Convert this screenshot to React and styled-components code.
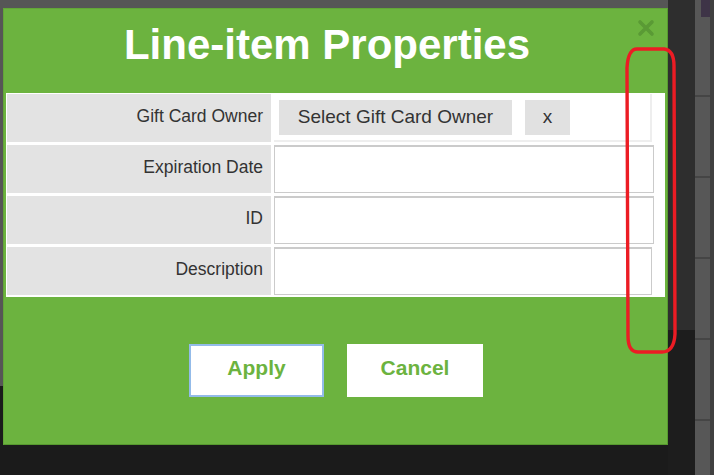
import React from "react";
import styled, { createGlobalStyle } from "styled-components";

const GlobalStyle = createGlobalStyle`
  html, body {
    margin: 0;
    padding: 0;
    background: #1c1c1c;
  }
  body {
    font-family: "Liberation Sans", Arial, sans-serif;
  }
`;

const rows = [
  { label: "Gift Card Owner", kind: "owner" },
  { label: "Expiration Date", kind: "input" },
  { label: "ID", kind: "input" },
  { label: "Description", kind: "input", narrow: true },
];

const App = () => {
  return (
    <Page>
      <GlobalStyle />
      <MainPane />
      <Gutter />
      <RightRail>
        <RailTab $tone="#3e3447" $h={17} />
        {[0, 1, 2, 3, 4].map((i) => (
          <RailLine key={i} />
        ))}
      </RightRail>

      <Modal>
        <CloseButton aria-label="close">
          <svg width="18" height="18" viewBox="0 0 18 18">
            <path
              d="M3 3 L15 15 M15 3 L3 15"
              stroke="#5a9a35"
              strokeWidth="3.6"
              strokeLinecap="round"
            />
          </svg>
        </CloseButton>
        <Header>
          <Title>Line-item Properties</Title>
        </Header>

        <PropTable>
          {rows.map((row) => (
            <React.Fragment key={row.label}>
              <Label>{row.label}</Label>
              {row.kind === "owner" ? (
                <OwnerCell>
                  <GrayButton $w={233}>Select Gift Card Owner</GrayButton>
                  <GrayButton $w={45}>x</GrayButton>
                </OwnerCell>
              ) : (
                <Field $narrow={row.narrow} />
              )}
            </React.Fragment>
          ))}
        </PropTable>

        <Footer>
          <ActionButton $focused $w={135}>Apply</ActionButton>
          <ActionButton $w={136}>Cancel</ActionButton>
        </Footer>
      </Modal>

      <Annotation width="714" height="475" viewBox="0 0 714 475">
        <path
          d="M637 49 L664 49 Q674 50 674 66 L675 334 Q674 352 662 352 L638 352 Q628 352 628 336 L627 68 Q628 49 637 49 Z"
          fill="none"
          stroke="#ec1c24"
          strokeWidth="3.4"
        />
      </Annotation>
    </Page>
  );
};

export default App;

const Page = styled.div`
  position: relative;
  width: 714px;
  height: 475px;
  overflow: hidden;
  display: flex;
`;

const MainPane = styled.div`
  flex: 0 0 668px;
  background: linear-gradient(to bottom, #565656 0 386px, #1b1b1b 386px);
`;

const Gutter = styled.div`
  flex: 0 0 27px;
  background: linear-gradient(to bottom, #2e2e2e 0 330px, #1d1d1d 330px);
`;

const RightRail = styled.div`
  flex: 1;
  background: #575757;
  border-right: 4px solid #404040;
  display: flex;
  flex-direction: column;
  gap: 79px;
`;

const RailTab = styled.div`
  height: ${(p) => p.$h}px;
  margin-left: 6px;
  margin-bottom: -1px;
  background: ${(p) => p.$tone};
`;

const RailLine = styled.div`
  height: 2px;
  background: #454545;
`;

const Modal = styled.div`
  position: absolute;
  left: 3px;
  top: 8px;
  width: 665px;
  height: 437px;
  box-sizing: border-box;
  background: #6cb33f;
  border: 1px solid #62a637;
  border-right-color: #579a2f;
  border-bottom-color: #579a2f;
  display: flex;
  flex-direction: column;
`;

const CloseButton = styled.div`
  position: absolute;
  left: 633px;
  top: 10px;
  width: 18px;
  height: 18px;
  cursor: pointer;
`;

const Header = styled.div`
  height: 84px;
  padding: 12px 17px 0 0;
  box-sizing: border-box;
`;

const Title = styled.h1`
  margin: 0;
  text-align: center;
  color: #ffffff;
  font-size: 42px;
  line-height: 48px;
  font-weight: bold;
`;

const PropTable = styled.div`
  margin: 0 2px;
  background: #ffffff;
  display: grid;
  grid-template-columns: 264px 380px;
  grid-auto-rows: 48px;
  column-gap: 3px;
  row-gap: 3px;
  padding: 1px 11px 2px 1px;
`;

const Label = styled.div`
  background: #e3e3e3;
  color: #333333;
  font-size: 17.5px;
  display: flex;
  align-items: center;
  justify-content: flex-end;
  padding: 0 8px 4px 0;
`;

const OwnerCell = styled.div`
  width: 378px;
  box-sizing: border-box;
  border-right: 2px solid #eeeeee;
  border-bottom: 2px solid #eeeeee;
  display: flex;
  align-items: flex-start;
  gap: 13px;
  padding: 6px 0 0 5px;
`;

const GrayButton = styled.div`
  width: ${(p) => p.$w}px;
  height: 35px;
  box-sizing: border-box;
  padding-bottom: 2px;
  background: #e1e1e1;
  color: #333333;
  font-size: 19px;
  display: flex;
  align-items: center;
  justify-content: center;
`;

const Field = styled.div`
  width: ${(p) => (p.$narrow ? 378 : 380)}px;
  box-sizing: border-box;
  background: #ffffff;
  border: 1px solid #cbcbcb;
  border-top-width: 2px;
`;

const Footer = styled.div`
  flex: 1;
  display: flex;
  justify-content: center;
  align-items: flex-start;
  gap: 23px;
  padding: 47px 0 0 1px;
`;

const ActionButton = styled.div`
  width: ${(p) => p.$w}px;
  height: 53px;
  box-sizing: border-box;
  padding-bottom: 5px;
  background: #ffffff;
  border: ${(p) => (p.$focused ? "2px solid #93bbe9" : "none")};
  color: #6cb33f;
  font-size: 21px;
  font-weight: bold;
  display: flex;
  align-items: center;
  justify-content: center;
`;

const Annotation = styled.svg`
  position: absolute;
  left: 0;
  top: 0;
  pointer-events: none;
`;
